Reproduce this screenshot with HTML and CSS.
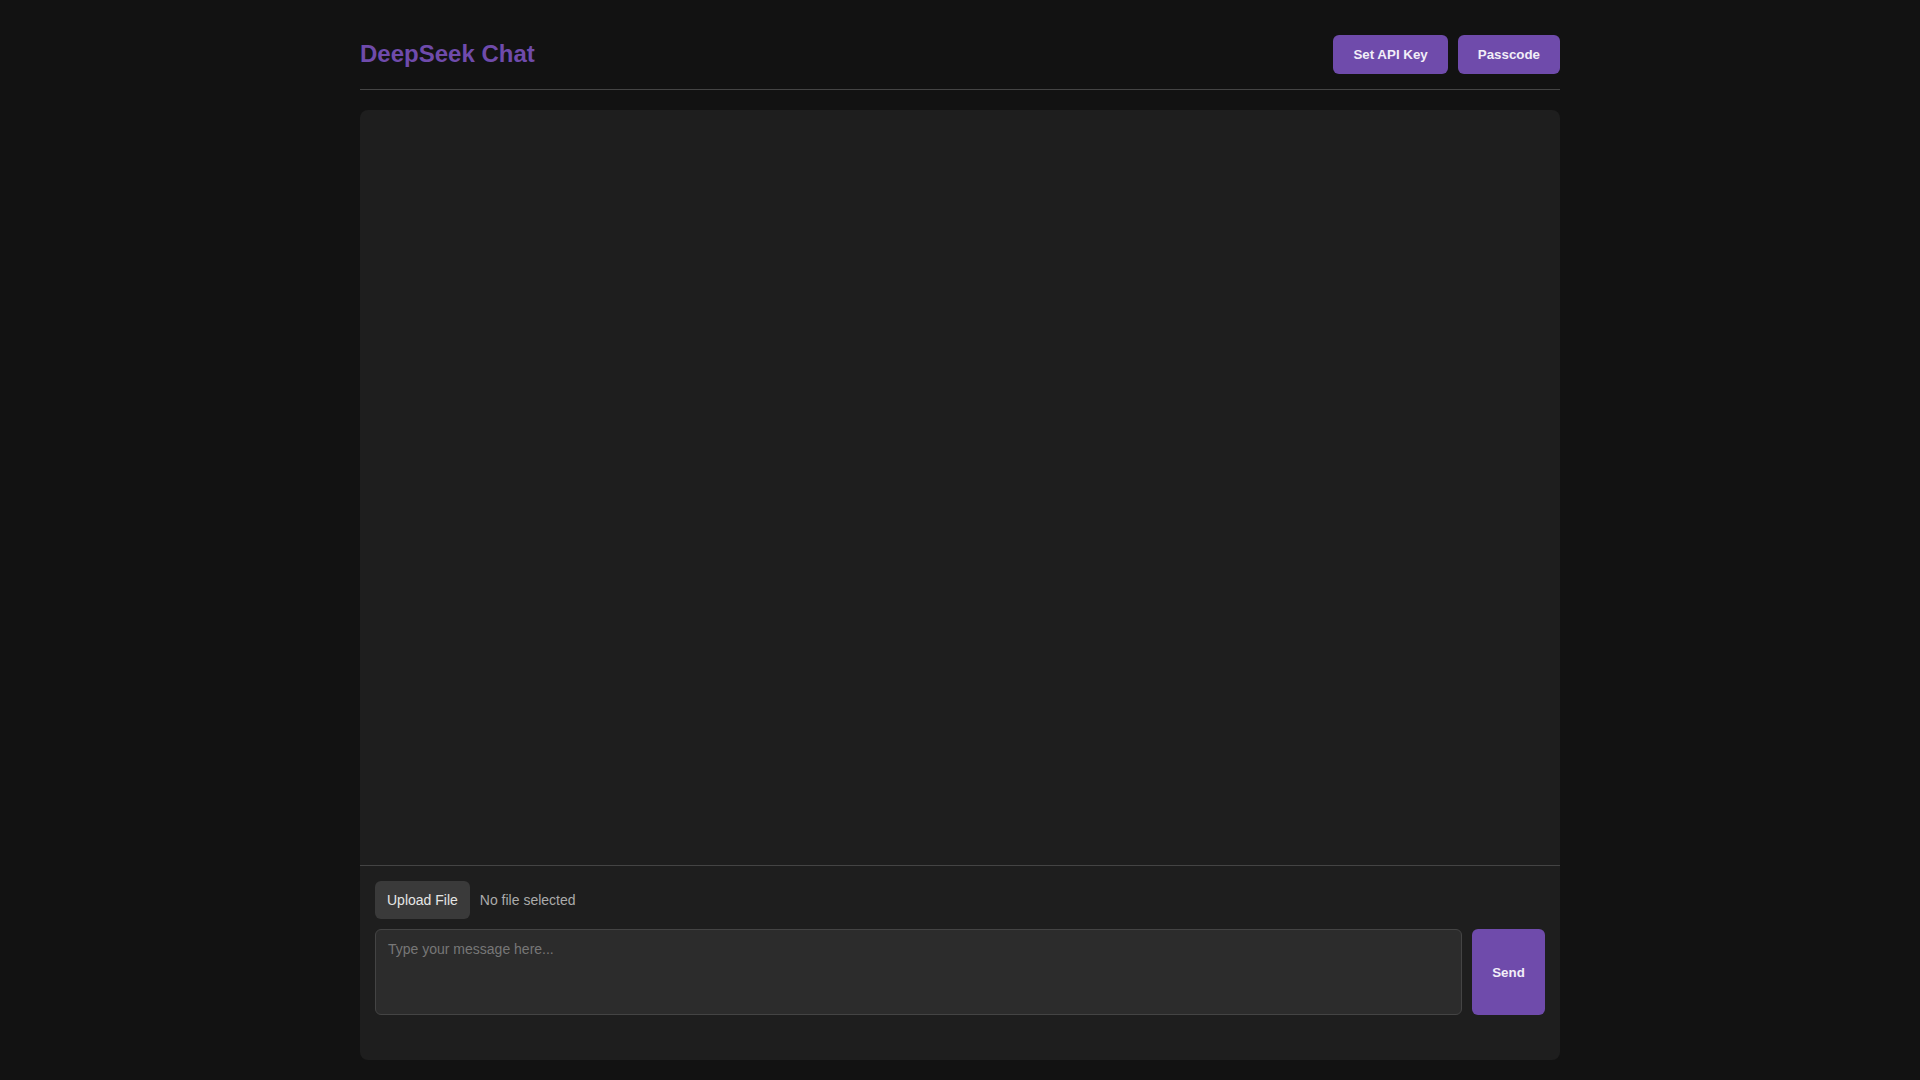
FILE: index.html
```html
<!DOCTYPE html>
<html lang="en">
<head>
<meta charset="utf-8">
<title>DeepSeek Chat</title>
<link rel="stylesheet" href="styles.css">
</head>
<body>
<div class="container">
  <header class="header">
    <h1 class="title">DeepSeek Chat</h1>
    <div class="header-actions">
      <button class="btn">Set API Key</button>
      <button class="btn">Passcode</button>
    </div>
  </header>
  <main class="chat">
    <div class="messages"></div>
    <div class="input-area">
      <div class="file-row">
        <label class="upload-btn">Upload File</label>
        <span class="file-name">No file selected</span>
      </div>
      <div class="compose">
        <textarea class="message-input" placeholder="Type your message here..."></textarea>
        <button class="btn send-btn">Send</button>
      </div>
    </div>
  </main>
</div>
</body>
</html>
```
FILE: styles.css
```css
* { box-sizing: border-box; }
html, body { margin: 0; padding: 0; height: 100%; }
body {
  background: #121212;
  color: #e0e0e0;
  font-family: "Liberation Sans", Arial, sans-serif;
}
.container {
  max-width: 1200px;
  margin: 0 auto;
  height: 100vh;
  padding: 20px 0;
  display: flex;
  flex-direction: column;
}
.header {
  display: flex;
  align-items: center;
  justify-content: space-between;
  padding: 15px 0;
  border-bottom: 1px solid #444;
  margin-bottom: 20px;
  height: 70px;
}
.title {
  margin: 0 0 2px;
  font-size: 24px;
  font-weight: bold;
  color: #6f4bab;
}
.header-actions { display: flex; gap: 10px; }
.btn {
  background: #6f4bab;
  color: #f2eef8;
  border: none;
  border-radius: 6px;
  padding: 12px 20px;
  font-family: "Liberation Sans", Arial, sans-serif;
  font-size: 13.333px;
  font-weight: bold;
  line-height: 15px;
  cursor: pointer;
}
.chat {
  flex: 1;
  background: #1e1e1e;
  border-radius: 8px;
  display: flex;
  flex-direction: column;
  overflow: hidden;
}
.messages { flex: 1; }
.input-area {
  border-top: 1px solid #444;
  padding: 15px 15px 45px;
}
.file-row {
  display: flex;
  align-items: center;
  gap: 10px;
  margin-bottom: 10px;
}
.upload-btn {
  background: #3a3a3a;
  color: #e6e6e6;
  border-radius: 6px;
  padding: 11px 12px;
  font-size: 14px;
  line-height: 16px;
  height: 38px;
}
.file-name { color: #ababab; font-size: 14px; }
.compose { display: flex; gap: 10px; }
.message-input {
  flex: 1;
  height: 86px;
  background: #2c2c2c;
  border: 1px solid #444;
  border-radius: 6px;
  color: #e0e0e0;
  padding: 11px 12px 10px;
  font-family: "Liberation Sans", Arial, sans-serif;
  font-size: 14px;
  resize: none;
  outline: none;
}
.message-input::placeholder { color: #777; }
.send-btn { height: 86px; width: 73px; padding: 0; }
```
